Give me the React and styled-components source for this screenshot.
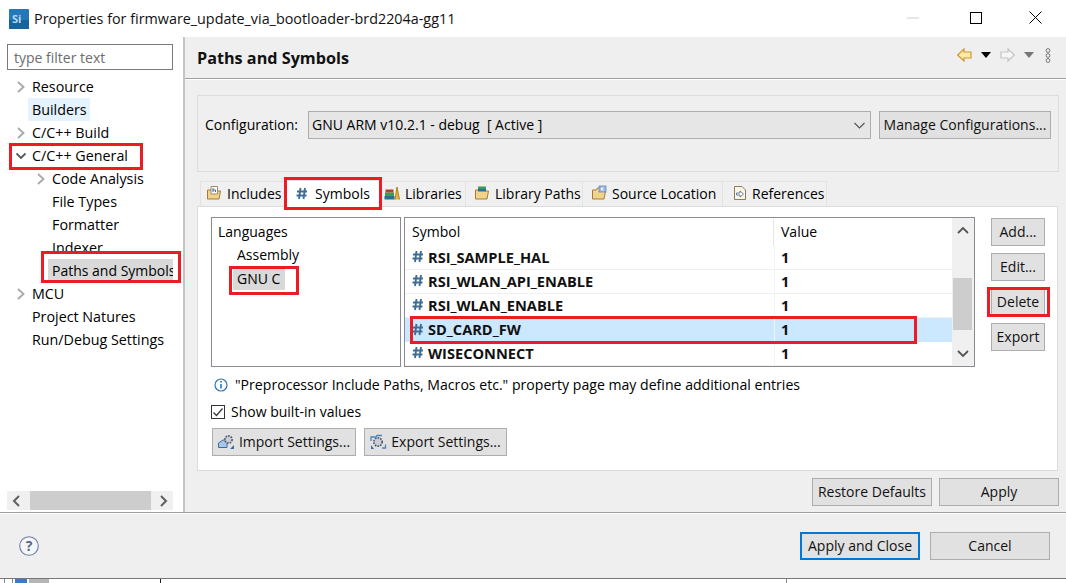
import React from "react";
import styled, { createGlobalStyle } from "styled-components";

const Global = createGlobalStyle`
  html, body { margin: 0; padding: 0; background: #fff; }
  * { box-sizing: border-box; }
`;
const Page = styled.div`
  width: 1066px; height: 583px; overflow: hidden; display: flex; flex-direction: column;
  background: #fff; color: #000; font-family: "Open Sans", "Noto Sans", sans-serif; font-size: 14px;
`;
const TitleBar = styled.div`
  height: 37px; flex: none; display: flex; align-items: center; padding: 0 0 0 9px; gap: 5px;
  font-size: 14.35px; color: #111;
`;
const TitleText = styled.div`flex: 1; white-space: nowrap; padding-bottom: 1px;`;
const WinButton = styled.div`
  width: ${p => p.$w || 46}px; height: 37px; padding-bottom: 2px; display: flex; align-items: center; justify-content: center; margin-right: ${p => p.$mr || 0}px;
`;
const Body = styled.div`display: flex; height: 475px; flex: none;`;
const Left = styled.div`
  width: 185px; flex: none; border-right: 2px solid #c4c4c4; padding: 7px 10px 2px 7px; display: flex; flex-direction: column; position: relative;
`;
const Filter = styled.div`
  width: 166px; height: 26px; border: 1px solid #7a7a7a; padding: 0 6px; display: flex; align-items: center; color: #6d6d6d; font-size: 14px; flex: none; margin-bottom: 5px;
`;
const Tree = styled.div`flex: 1; display: flex; flex-direction: column; font-size: 14.3px;`;
const TreeRow = styled.div`
  height: 23px; display: flex; align-items: center; position: relative; padding-left: ${p => p.$indent ? 41 : 21}px; white-space: nowrap; flex: none;
`;
const Twisty = styled.svg`
  position: absolute; left: ${p => p.$indent ? 29 : 9}px; top: 6px; width: 10px; height: 12px;
`;
const TreeLabel = styled.span`
  padding: 0 ${p => p.$sel === "grey" ? 0 : 3}px 0 4px; height: 23px; line-height: 24px; display: block; overflow: hidden;
  background: ${p => p.$sel === "grey" ? "#d9d9d9" : p.$sel === "blue" ? "#e5f3ff" : "transparent"};
  width: ${p => p.$w ? p.$w + "px" : "auto"};
  font-size: ${p => p.$sel === "grey" ? "14px" : "inherit"};
`;
const HScroll = styled.div`
  width: 166px; height: 19px; background: #f0f0f0; display: flex; align-items: center; justify-content: space-between; flex: none;
`;
const HThumb = styled.div`width: 121px; height: 19px; background: #cdcdcd;`;
const HArrow = styled.svg`width: 21px; height: 12px; flex: none;`;

const Callout = styled.div`
  position: absolute; border: 3px solid #ed1c24; pointer-events: none; z-index: 5;
  left: ${p => p.$l}px; top: ${p => p.$t}px; width: ${p => p.$w}px; height: ${p => p.$h}px;
`;

const Right = styled.div`flex: 1; background: #efefef; display: flex; flex-direction: column; min-width: 0;`;
const Header = styled.div`
  height: 42px; flex: none; display: flex; align-items: center; justify-content: space-between; padding: 1px 15px 0 12px;
  border-bottom: 1px solid #a0a0a0; box-shadow: 0 1px 0 #fff;
`;
const HeaderTitle = styled.div`font-size: 16.2px; font-weight: 700; color: #111;`;
const HeaderTools = styled.div`display: flex; align-items: center; gap: 9px; margin-bottom: 6px;`;
const Content = styled.div`flex: 1; padding: 16px 7px 0 12px; display: flex; flex-direction: column;`;
const ConfigGroup = styled.div`
  height: 77px; flex: none; border: 1px solid #dcdcdc; display: flex; align-items: flex-start; padding: 15px 6px 0 7px; margin-bottom: 9px;
`;
const ConfigLabel = styled.div`width: 103px; line-height: 28px; flex: none;`;
const Select = styled.div`
  width: 563px; height: 28px; border: 1px solid #adadad; background: #e6e6e6; padding: 0 3px; display: flex; justify-content: space-between; align-items: center; margin-right: 8px; flex: none;
`;
const SelectText = styled.span`line-height: 24px;`;
const Button = styled.div`
  height: 28px; width: ${p => p.$w}px; flex: none; display: flex; align-items: center; justify-content: center; gap: 3px; white-space: nowrap;
  background: #e1e1e1; border: ${p => p.$def ? "2px solid #0078d7" : "1px solid #adadad"}; position: relative; color: #111;
  padding-bottom: 1px;
`;
const Tabs = styled.div`display: flex; height: 25px; flex: none; padding-left: 3px; align-items: flex-end;`;
const Tab = styled.div`
  width: ${p => p.$w}px; height: ${p => p.$sel ? 27 : 25}px; flex: none; display: flex; align-items: center; gap: ${p => p.$sel ? 7 : 5}px; white-space: nowrap; position: relative;
  padding: 0 0 2px ${p => p.$pl}px;
  background: ${p => p.$sel ? "#fff" : "#f0f0f0"}; border: 1px solid #e3e3e3; border-bottom: none; margin-bottom: ${p => p.$sel ? "-1px" : 0}; z-index: ${p => p.$sel ? 2 : 0};
  border-left: ${p => p.$sel ? "1px solid #e3e3e3" : "none"};
  &:first-child { border-left: 1px solid #e3e3e3; }
`;
const TabPanel = styled.div`
  width: 861px; height: 265px; flex: none; background: #fff; border: 1px solid #dcdcdc; padding: 10px 13px 0; display: flex; flex-direction: column;
`;
const TopRow = styled.div`display: flex; height: 150px; flex: none;`;
const LangList = styled.div`
  width: 190px; height: 150px; border: 1px solid #8a8a90; padding: 1px 6px; margin-right: 3px; position: relative; flex: none;
`;
const LangHead = styled.div`height: 25px; line-height: 26px;`;
const LangItem = styled.div`
  height: 23px; line-height: ${p => p.$sel ? 24 : 22}px; margin-left: ${p => p.$sel ? 15 : 19}px; padding: 0 ${p => p.$sel ? 4 : 0}px; width: ${p => p.$sel ? "52px" : "auto"};
  background: ${p => p.$sel ? "#d9d9d9" : "transparent"}; position: relative;
`;
const Table = styled.div`
  width: 571px; height: 150px; border: 1px solid #8a8a90; display: flex; margin-right: 16px; flex: none;
`;
const TableMain = styled.div`flex: 1; display: flex; flex-direction: column; padding-top: 1px;`;
const HeadRow = styled.div`height: 27px; display: flex; align-items: center; flex: none;`;
const Row = styled.div`
  height: 24px; display: flex; align-items: center; flex: none; font-weight: 700; font-size: 14.6px; position: relative; color: #111;
  background: ${p => p.$sel ? "#cce8ff" : "transparent"};
  border-bottom: ${p => p.$sel ? "none" : "1px solid #f0f0f0"};
`;
const SymCell = styled.div`
  width: 369px; padding: 0 0 2px 7px; display: flex; align-items: center; gap: 4px; flex: none; white-space: nowrap;
`;
const HeadCell = styled.div`
  padding-left: 7px; width: ${p => p.$first ? "369px" : "auto"}; flex: none; font-weight: 400; height: 27px; line-height: 26px;
  border-right: ${p => p.$first ? "1px solid #e5e5e5" : "none"};
`;
const ValCell = styled.div`padding: 0 0 2px 6px; border-left: 1px solid #f3f3f3; height: 100%; display: flex; align-items: center;`;
const VScroll = styled.div`
  width: 22px; flex: none; background: #f0f0f0; display: flex; flex-direction: column; align-items: center; justify-content: space-between; padding: 3px 0 3px; position: relative;
`;
const VThumb = styled.div`
  position: absolute; left: 1px; top: 60px; width: 19px; height: 52px; background: #cdcdcd;
`;
const SideButtons = styled.div`display: flex; flex-direction: column; gap: 7px; width: 54px; padding-top: 1px; flex: none;`;
const InfoLine = styled.div`height: 25px; margin-top: 5px; display: flex; align-items: center; gap: 7px; padding-left: 3px; flex: none; font-size: 14.1px; white-space: nowrap;`;
const Check = styled.label`height: 27px; display: flex; align-items: center; gap: 6px; flex: none; margin-top: 1px;`;
const CheckBox = styled.span`
  width: 14px; height: 14px; border: 1px solid #333; display: flex; align-items: center; justify-content: center; background: #fff; flex: none;
`;
const SettingRow = styled.div`display: flex; gap: 8px; margin-top: 3px; padding-left: 1px; flex: none;`;
const ApplyRow = styled.div`display: flex; justify-content: flex-end; gap: 7px; margin-top: 7px; flex: none;`;
const Footer = styled.div`
  height: 67px; flex: none; border-top: 1px solid #a0a0a0; box-shadow: inset 0 1px 0 #fff; background: #efefef; display: flex; align-items: center; justify-content: space-between; padding: 0 16px 0 19px; border-bottom: 1px solid #777;
`;
const FooterButtons = styled.div`display: flex; gap: 10px; margin-top: 1px;`;
const Strip = styled.div`flex: 1; position: relative; background: #fff;`;
const StripMark = styled.span`
  position: absolute; top: 0; bottom: 0; left: ${p => p.$l}px; width: ${p => p.$w}px; background: ${p => p.$c};
`;

const Chevron = ({ open, indent }) => (
  <Twisty $indent={indent} viewBox="0 0 10 12">
    {open
      ? <path d="M0.5 3.5 L5 8 L9.5 3.5" fill="none" stroke="#555" strokeWidth="1.8" />
      : <path d="M2 1 L7.5 6 L2 11" fill="none" stroke="#a8a8a8" strokeWidth="1.8" />}
  </Twisty>
);
const Hash = () => (
  <svg width="12" height="13" viewBox="0 0 12 13" style={{ flex: "none" }}>
    <path d="M4.5 1 L3 12 M9 1 L7.5 12 M1 4.5 H11 M0.5 8.5 H10.5" fill="none" stroke="#3f6d96" strokeWidth="1.9" />
  </svg>
);
const FolderIcon = ({ children }) => (
  <svg width="16" height="16" viewBox="0 0 16 16" style={{ flex: "none" }}>
    <path d="M1.5 5 H5 L6.5 3 H11 V6 H14.5 L13 14 H1.5 Z" fill="#f0d48a" stroke="#a8793a" />
    {children}
  </svg>
);
const IncludesIcon = () => (
  <FolderIcon>
    <path d="M5 1.5 H11.5 V9 H5 Z" fill="#fff" stroke="#a08a6a" />
    <path d="M7 3 V7 M7 5 H9.5 V7" fill="none" stroke="#3f6d96" />
  </FolderIcon>
);
const BooksIcon = () => (
  <svg width="16" height="16" viewBox="0 0 16 16" style={{ flex: "none" }}>
    <rect x="0.5" y="11" width="10" height="3.5" fill="#2a6f97" />
    <rect x="1" y="7.5" width="9" height="3.5" fill="#3e9a5b" />
    <rect x="1.5" y="4.5" width="8" height="3" fill="#b0432f" />
    <path d="M11 14.5 L13 2 L15.5 14.5" fill="#e6b53c" stroke="#b0821d" />
  </svg>
);
const LibFolderIcon = () => (
  <FolderIcon>
    <rect x="4" y="1.5" width="8" height="2.5" fill="#3e9a5b" />
    <rect x="4" y="4" width="8" height="2.5" fill="#2a6f97" />
  </FolderIcon>
);
const SourceIcon = () => (
  <FolderIcon>
    <rect x="8" y="1" width="7" height="6" fill="#9ab8e0" stroke="#5f7fb0" strokeWidth="0.7" />
    <path d="M12.5 3 H10.5 V5 H12.5" fill="none" stroke="#fff" />
  </FolderIcon>
);
const RefIcon = () => (
  <svg width="14" height="16" viewBox="0 0 14 16" style={{ flex: "none" }}>
    <path d="M1.5 1.5 H9 L12.5 5 V14.5 H1.5 Z" fill="#fbf7e8" stroke="#8a7d5a" />
    <path d="M3.5 8 H7 V6 L10.5 9 L7 12 V10 H3.5 Z" fill="#fff" stroke="#5a6f8f" strokeWidth="0.9" />
  </svg>
);
const ImportIcon = () => (
  <svg width="17" height="16" viewBox="0 0 17 16" style={{ flex: "none", marginRight: 1 }}>
    <path d="M0.5 9 L5 6 H9 V13.5 H0.5 Z" fill="#a9c6e6" stroke="#3f6d96" />
    <circle cx="10.5" cy="5.5" r="3.6" fill="#c9ced6" stroke="#50566a" strokeDasharray="1.6 1.1" strokeWidth="1.7" />
    <path d="M12 15 L16 15 L16 11 Z" fill="#2f6ea8" />
  </svg>
);
const ExportIcon = () => (
  <svg width="17" height="16" viewBox="0 0 17 16" style={{ flex: "none", marginRight: 1 }}>
    <circle cx="8" cy="8" r="4.2" fill="#c9ced6" stroke="#50566a" strokeDasharray="1.6 1.1" strokeWidth="1.7" />
    <path d="M1 7 V3 H6 L7 1.5 H12" fill="none" stroke="#4d82b8" strokeWidth="1.3" />
    <path d="M1 15 L4 15 L1 11 Z" fill="#2f6ea8" />
    <path d="M12 14 H15.5 V10.5" fill="none" stroke="#4d82b8" strokeWidth="1.3" />
  </svg>
);
const Sym = ({ children }) => (
  <SymCell><Hash />{children}</SymCell>
);

export default function App() {
  return (
    <Page>
      <Global />
      <TitleBar>
        <svg width="20" height="20" viewBox="0 0 20 20" style={{ flex: "none" }}>
          <rect width="20" height="20" rx="1" fill="#2379b8" />
          <rect y="11" width="20" height="9" fill="#15649c" />
          <text x="3" y="14" fontSize="11" fontWeight="700" fill="#b9d8ef" fontFamily="Open Sans">Si</text>
        </svg>
        <TitleText>Properties for firmware_update_via_bootloader-brd2204a-gg11</TitleText>
        <WinButton $mr={12}>
          <svg width="12" height="12" viewBox="0 0 12 12"><path d="M0 6 H12" stroke="#d0d0d0" /></svg>
        </WinButton>
        <WinButton $mr={8}>
          <svg width="12" height="12" viewBox="0 0 12 12"><rect x="0.5" y="0.5" width="11" height="11" fill="none" stroke="#000" /></svg>
        </WinButton>
        <WinButton $mr={8}>
          <svg width="13" height="13" viewBox="0 0 13 13"><path d="M0.5 0.5 L12.5 12.5 M12.5 0.5 L0.5 12.5" stroke="#000" /></svg>
        </WinButton>
      </TitleBar>
      <Body>
        <Left>
          <Filter>type filter text</Filter>
          <Tree>
            <TreeRow><Chevron /><TreeLabel>Resource</TreeLabel></TreeRow>
            <TreeRow><TreeLabel $sel="blue">Builders</TreeLabel></TreeRow>
            <TreeRow><Chevron /><TreeLabel>C/C++ Build</TreeLabel></TreeRow>
            <TreeRow>
              <Chevron open /><TreeLabel>C/C++ General</TreeLabel>
              <Callout $l={2} $t={-1} $w={134} $h={27} />
            </TreeRow>
            <TreeRow $indent><Chevron indent /><TreeLabel>Code Analysis</TreeLabel></TreeRow>
            <TreeRow $indent><TreeLabel>File Types</TreeLabel></TreeRow>
            <TreeRow $indent><TreeLabel>Formatter</TreeLabel></TreeRow>
            <TreeRow $indent><TreeLabel>Indexer</TreeLabel></TreeRow>
            <TreeRow $indent>
              <TreeLabel $sel="grey" $w={125}>Paths and Symbols</TreeLabel>
              <Callout $l={34} $t={-8} $w={140} $h={32} />
            </TreeRow>
            <TreeRow><Chevron /><TreeLabel>MCU</TreeLabel></TreeRow>
            <TreeRow><TreeLabel>Project Natures</TreeLabel></TreeRow>
            <TreeRow><TreeLabel>Run/Debug Settings</TreeLabel></TreeRow>
          </Tree>
          <HScroll>
            <HArrow viewBox="0 0 21 12"><path d="M12 1 L7 6 L12 11" fill="none" stroke="#606060" strokeWidth="2" /></HArrow>
            <HThumb />
            <HArrow viewBox="0 0 21 12"><path d="M9 1 L14 6 L9 11" fill="none" stroke="#606060" strokeWidth="2" /></HArrow>
          </HScroll>
        </Left>
        <Right>
          <Header>
            <HeaderTitle>Paths and Symbols</HeaderTitle>
            <HeaderTools>
              <svg width="15" height="14" viewBox="0 0 15 14"><path d="M0.7 7 L7 1 V4 H14 V10 H7 V13 Z" fill="#fde9a8" stroke="#d09a2c" strokeWidth="1.2" /></svg>
              <svg width="10" height="6" viewBox="0 0 10 6"><path d="M0 0 H10 L5 6 Z" fill="#000" /></svg>
              <svg width="15" height="14" viewBox="0 0 15 14"><path d="M14.3 7 L8 1 V4 H1 V10 H8 V13 Z" fill="#f6f6f6" stroke="#c4c4c4" strokeWidth="1.2" /></svg>
              <svg width="10" height="6" viewBox="0 0 10 6"><path d="M0 0 H10 L5 6 Z" fill="#777" /></svg>
              <svg width="6" height="15" viewBox="0 0 6 15" style={{ marginLeft: 2 }}>
                <circle cx="3" cy="2.5" r="1.9" fill="none" stroke="#777" />
                <circle cx="3" cy="7.5" r="1.9" fill="none" stroke="#777" />
                <circle cx="3" cy="12.5" r="1.9" fill="none" stroke="#777" />
              </svg>
            </HeaderTools>
          </Header>
          <Content>
            <ConfigGroup>
              <ConfigLabel>Configuration:</ConfigLabel>
              <Select>
                <SelectText>GNU ARM v10.2.1 - debug&nbsp; [ Active ]</SelectText>
                <svg width="11" height="7" viewBox="0 0 11 7" style={{ marginRight: 2 }}><path d="M0.5 1 L5.5 6 L10.5 1" fill="none" stroke="#555" strokeWidth="1.2" /></svg>
              </Select>
              <Button $w={172}>Manage Configurations...</Button>
            </ConfigGroup>
            <Tabs>
              <Tab $w={85} $pl={5}><IncludesIcon />Includes</Tab>
              <Tab $w={96} $pl={10} $sel>
                <Hash />Symbols
                <Callout $l={-2} $t={-4} $w={98} $h={33} />
              </Tab>
              <Tab $w={85} $pl={3}><BooksIcon />Libraries</Tab>
              <Tab $w={117} $pl={8}><LibFolderIcon />Library Paths</Tab>
              <Tab $w={140} $pl={8}><SourceIcon />Source Location</Tab>
              <Tab $w={104} $pl={10}><RefIcon />References</Tab>
            </Tabs>
            <TabPanel>
              <TopRow>
                <LangList>
                  <LangHead>Languages</LangHead>
                  <LangItem>Assembly</LangItem>
                  <LangItem $sel>GNU C<Callout $l={-4} $t={-1} $w={70} $h={29} /></LangItem>
                </LangList>
                <Table>
                  <TableMain>
                    <HeadRow>
                      <HeadCell $first>Symbol</HeadCell>
                      <HeadCell>Value</HeadCell>
                    </HeadRow>
                    <Row><Sym>RSI_SAMPLE_HAL</Sym><ValCell>1</ValCell></Row>
                    <Row><Sym>RSI_WLAN_API_ENABLE</Sym><ValCell>1</ValCell></Row>
                    <Row><Sym>RSI_WLAN_ENABLE</Sym><ValCell>1</ValCell></Row>
                    <Row $sel>
                      <Sym>SD_CARD_FW</Sym><ValCell>1</ValCell>
                      <Callout $l={5} $t={-2} $w={507} $h={28} />
                    </Row>
                    <Row><Sym>WISECONNECT</Sym><ValCell>1</ValCell></Row>
                  </TableMain>
                  <VScroll>
                    <svg width="12" height="8" viewBox="0 0 12 8" style={{ marginTop: 5 }}><path d="M1 7 L6 2 L11 7" fill="none" stroke="#555" strokeWidth="1.8" /></svg>
                    <VThumb />
                    <svg width="12" height="8" viewBox="0 0 12 8" style={{ marginBottom: 5 }}><path d="M1 1 L6 6 L11 1" fill="none" stroke="#555" strokeWidth="1.8" /></svg>
                  </VScroll>
                </Table>
                <SideButtons>
                  <Button $w={54}>Add...</Button>
                  <Button $w={54}>Edit...</Button>
                  <Button $w={54}>Delete<Callout $l={-5} $t={-2} $w={63} $h={30} /></Button>
                  <Button $w={54}>Export</Button>
                </SideButtons>
              </TopRow>
              <InfoLine>
                <svg width="14" height="14" viewBox="0 0 14 14">
                  <circle cx="7" cy="7" r="6" fill="#fff" stroke="#2f76b5" strokeWidth="1.2" />
                  <path d="M7 6 V10.5 M7 3 V4.6" stroke="#2f76b5" strokeWidth="1.6" />
                </svg>
                "Preprocessor Include Paths, Macros etc." property page may define additional entries
              </InfoLine>
              <Check>
                <CheckBox>
                  <svg width="12" height="12" viewBox="0 0 12 12"><path d="M1.5 6.5 L4.5 9.5 L10.5 2.5" fill="none" stroke="#333" strokeWidth="1.2" /></svg>
                </CheckBox>
                Show built-in values
              </Check>
              <SettingRow>
                <Button $w={144}><ImportIcon />Import Settings...</Button>
                <Button $w={143}><ExportIcon />Export Settings...</Button>
              </SettingRow>
            </TabPanel>
            <ApplyRow>
              <Button $w={120}>Restore Defaults</Button>
              <Button $w={120}>Apply</Button>
            </ApplyRow>
          </Content>
        </Right>
      </Body>
      <Footer>
        <svg width="20" height="20" viewBox="0 0 20 20">
          <circle cx="10" cy="10" r="9.3" fill="#f6f6f6" stroke="#6c7fa3" strokeWidth="1.1" />
          <text x="10" y="15" textAnchor="middle" fontSize="14" fontWeight="700" fill="#54678c" fontFamily="Open Sans">?</text>
        </svg>
        <FooterButtons>
          <Button $w={120} $def>Apply and Close</Button>
          <Button $w={120}>Cancel</Button>
        </FooterButtons>
      </Footer>
      <Strip>
        <StripMark $l={4} $w={1} $c="#888" />
        <StripMark $l={12} $w={1} $c="#888" />
        <StripMark $l={15} $w={12} $c="#3f78c8" />
        <StripMark $l={29} $w={20} $c="#b5b5b5" />
        <StripMark $l={160} $w={1} $c="#222" />
        <StripMark $l={786} $w={1} $c="#888" />
      </Strip>
    </Page>
  );
}
